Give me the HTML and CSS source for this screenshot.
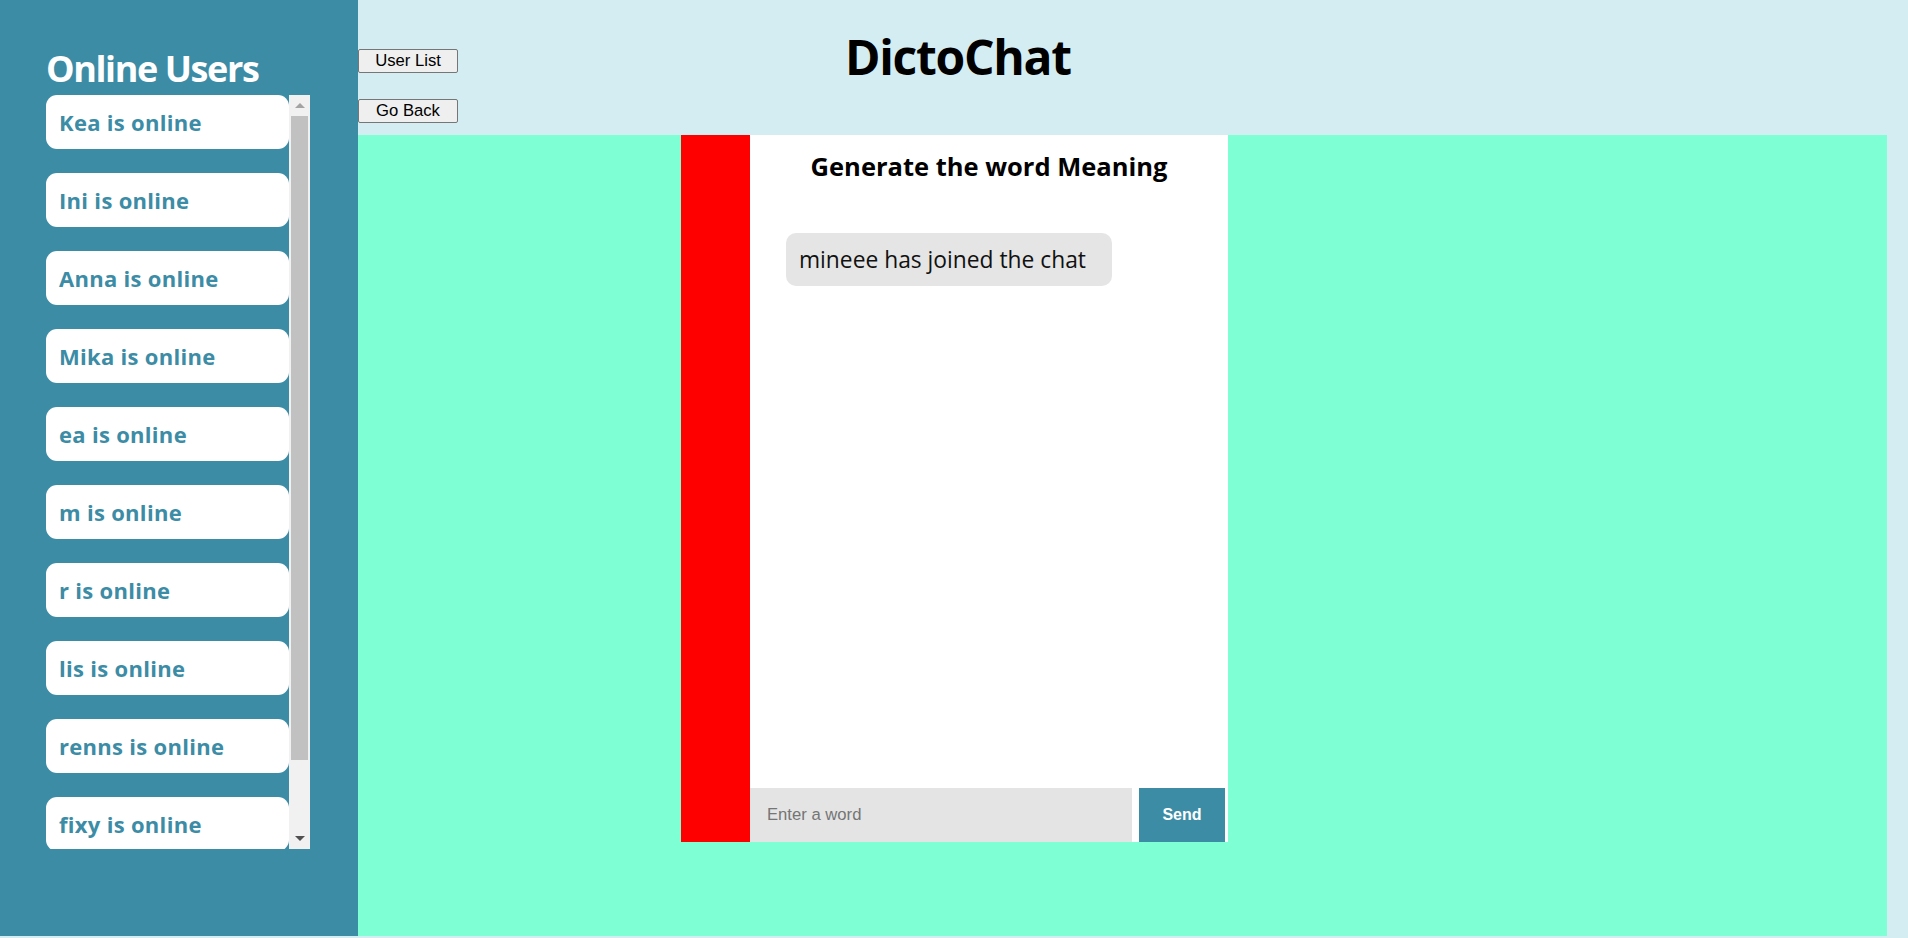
FILE: index.html
```html
<!DOCTYPE html>
<html lang="en">
<head>
<meta charset="utf-8">
<title>DictoChat</title>
<link rel="stylesheet" href="styles.css">
</head>
<body>
<div class="page">
  <aside class="sidebar">
    <h2 class="sidebar-title">Online Users</h2>
    <div class="user-panel">
      <ul class="user-list">
        <li class="user-card">Kea is online</li>
        <li class="user-card">Ini is online</li>
        <li class="user-card">Anna is online</li>
        <li class="user-card">Mika is online</li>
        <li class="user-card">ea is online</li>
        <li class="user-card">m is online</li>
        <li class="user-card">r is online</li>
        <li class="user-card">lis is online</li>
        <li class="user-card">renns is online</li>
        <li class="user-card">fixy is online</li>
      </ul>
      <div class="scrollbar" aria-hidden="true">
        <div class="sb-btn"><span class="sb-arrow-up"></span></div>
        <div class="sb-track"><div class="sb-thumb"></div></div>
        <div class="sb-btn"><span class="sb-arrow-down"></span></div>
      </div>
    </div>
  </aside>
  <main class="main">
    <header class="header">
      <div class="nav-buttons">
        <button class="nav-btn" type="button">User List</button>
        <button class="nav-btn" type="button">Go Back</button>
      </div>
      <h1 class="brand">DictoChat</h1>
    </header>
    <section class="content">
      <div class="chat">
        <div class="chat-side"></div>
        <div class="chat-panel">
          <h3 class="chat-title">Generate the word Meaning</h3>
          <div class="messages">
            <div class="bubble">mineee has joined the chat</div>
          </div>
          <form class="composer">
            <input class="word-input" type="text" placeholder="Enter a word">
            <button class="send-btn" type="button">Send</button>
          </form>
        </div>
      </div>
    </section>
  </main>
</div>
</body>
</html>
```
FILE: styles.css
```css
* { box-sizing: border-box; }

html, body {
  margin: 0;
  padding: 0;
}

body {
  background: #d4edf3;
  font-family: "Open Sans", "DejaVu Sans", sans-serif;
  overflow: hidden;
}

.page {
  display: flex;
  height: 936px;
}

/* Sidebar */
.sidebar {
  width: 358px;
  flex: none;
  background: #3c8ca6;
  padding: 50px 0 0 46px;
}

.sidebar-title {
  margin: 0 0 7px 0;
  color: #ffffff;
  font-size: 36px;
  line-height: 38px;
  font-weight: 700;
  letter-spacing: -1.4px;
}

.user-panel {
  display: flex;
  height: 754px;
  width: 264px;
}

.user-list {
  list-style: none;
  margin: 0;
  padding: 0;
  width: 243px;
  height: 754px;
  overflow: hidden;
}

.user-card {
  display: flex;
  align-items: center;
  width: 243px;
  height: 54px;
  margin-bottom: 24px;
  padding-left: 13px;
  background: #ffffff;
  border-radius: 11px;
  color: #3c8ca6;
  font-size: 22px;
  font-weight: 700;
  letter-spacing: 0.3px;
}

/* fake scrollbar */
.scrollbar {
  width: 21px;
  flex: none;
  background: #f1f1f1;
  display: flex;
  flex-direction: column;
}

.sb-btn {
  height: 21px;
  flex: none;
  display: flex;
  align-items: center;
  justify-content: center;
}

.sb-arrow-up {
  width: 0;
  height: 0;
  border-left: 5px solid transparent;
  border-right: 5px solid transparent;
  border-bottom: 5px solid #a3a3a3;
}

.sb-arrow-down {
  width: 0;
  height: 0;
  border-left: 5px solid transparent;
  border-right: 5px solid transparent;
  border-top: 5px solid #505050;
}

.sb-track {
  flex: 1;
  padding: 0 2px;
}

.sb-thumb {
  height: 644px;
  background: #c1c1c1;
}

/* Main */
.main {
  width: 1529px;
  flex: none;
  display: flex;
  flex-direction: column;
}

.header {
  height: 135px;
  flex: none;
  display: flex;
  align-items: flex-start;
}

.nav-buttons {
  display: flex;
  flex-direction: column;
  gap: 26px;
  padding-top: 49px;
}

.nav-btn {
  width: 100px;
  height: 24px;
  padding: 0;
  font-family: "Liberation Sans", Arial, sans-serif;
  font-size: 16.67px;
  color: #000000;
  background: #efefef;
  border: 1px solid #767676;
  border-radius: 2px;
}

.brand {
  margin: 24px 0 0 387px;
  font-size: 48px;
  line-height: 65px;
  font-weight: 700;
  color: #000000;
  letter-spacing: -1.3px;
}

.content {
  flex: 1;
  background: #7fffd4;
  padding-left: 323px;
}

.chat {
  display: flex;
  width: 547px;
  height: 707px;
}

.chat-side {
  width: 69px;
  flex: none;
  background: #ff0000;
}

.chat-panel {
  width: 478px;
  flex: none;
  background: #ffffff;
  display: flex;
  flex-direction: column;
}

.chat-title {
  margin: 13px 0 0 0;
  text-align: center;
  font-size: 25.5px;
  line-height: 36px;
  font-weight: 700;
  color: #000000;
}

.messages {
  flex: 1;
  padding: 49px 0 0 36px;
}

.bubble {
  display: inline-block;
  height: 53px;
  padding: 0 26px 0 13px;
  background: #e5e5e5;
  border-radius: 10px;
  font-size: 22.8px;
  line-height: 53px;
  color: #111111;
}

.composer {
  display: flex;
  height: 54px;
  margin: 0;
  padding-right: 3px;
  gap: 7px;
}

.word-input {
  width: 382px;
  height: 54px;
  border: none;
  outline: none;
  background: #e4e4e4;
  padding: 0 0 0 17px;
  font-family: "Liberation Sans", Arial, sans-serif;
  font-size: 16.67px;
  color: #000000;
}
.word-input::placeholder {
  color: #757575;
}

.send-btn {
  width: 86px;
  height: 54px;
  border: none;
  background: #3c8ca6;
  color: #ffffff;
  font-family: "Liberation Sans", Arial, sans-serif;
  font-size: 16px;
  font-weight: 700;
  padding: 0;
}
```
